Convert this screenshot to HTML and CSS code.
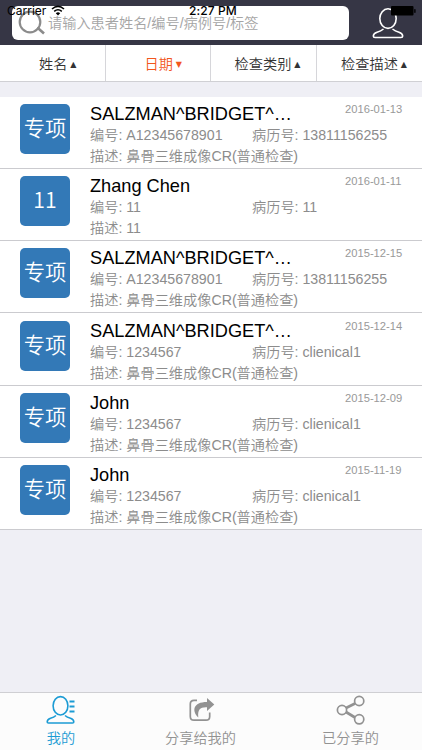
FILE: index.html
```
<!DOCTYPE html>
<html lang="zh-CN">
<head>
<meta charset="utf-8">
<title>我的</title>
<link rel="stylesheet" href="styles.css">
</head>
<body>
<div class="app">
  <div class="status">
    <span class="carrier">Carrier</span>
    <svg class="wifi" width="14" height="11" viewBox="0 0 14 11" fill="none" stroke="#000" stroke-width="1.6"><path d="M1 4Q7-1.2 13 4M3.2 6.3Q7 3.2 10.8 6.3"/><path d="M4.8 8.2Q7 6.5 9.2 8.2L7 10.6Z" fill="#000" stroke="none"/></svg>
    <span class="clock">2:27 PM</span>
    <svg class="battery" width="25" height="10" viewBox="0 0 25 10"><rect width="22.5" height="9.5" rx="1"/><rect x="23.2" y="3" width="1.4" height="4" rx=".7"/></svg>
  </div>
  <header class="header">
    <div class="search">
      <svg width="27" height="26" viewBox="0 0 27 26" fill="none" stroke="#8b8b8b" stroke-width="2.2"><circle cx="12" cy="12" r="10.3"/><path d="M19.3 17.5L26 23.5" stroke-width="2.6"/></svg>
      <span>请输入患者姓名/编号/病例号/标签</span>
    </div>
    <svg class="user" width="32" height="32" viewBox="0 0 32 32" fill="none" stroke="#fff" stroke-width="1.6" stroke-linejoin="round"><ellipse cx="16" cy="11.6" rx="8.2" ry="9.8"/><path d="M11.500 22Q9 24 5 25.200Q1.500 26.500 1.300 29Q1.300 30.500 3 30.500H29Q30.700 30.500 30.700 29Q30.500 26.500 27 25.200Q23 24 20.500 22"/></svg>
  </header>
  <nav class="sort">
    <div>姓名<i>▲</i></div>
    <div class="active">日期<i>▼</i></div>
    <div>检查类别<i>▲</i></div>
    <div>检查描述<i>▲</i></div>
  </nav>
  <main class="list">
    <article class="row"><div class="tag">专项</div><div class="info"><div class="top"><h2>SALZMAN^BRIDGET^…</h2><time>2016-01-13</time></div><div class="ids"><span>编号: A12345678901</span><span>病历号: 13811156255</span></div><p>描述: 鼻骨三维成像CR(普通检查)</p></div></article>
    <article class="row"><div class="tag">11</div><div class="info"><div class="top"><h2>Zhang Chen</h2><time>2016-01-11</time></div><div class="ids"><span>编号: 11</span><span>病历号: 11</span></div><p>描述: 11</p></div></article>
    <article class="row"><div class="tag">专项</div><div class="info"><div class="top"><h2>SALZMAN^BRIDGET^…</h2><time>2015-12-15</time></div><div class="ids"><span>编号: A12345678901</span><span>病历号: 13811156255</span></div><p>描述: 鼻骨三维成像CR(普通检查)</p></div></article>
    <article class="row"><div class="tag">专项</div><div class="info"><div class="top"><h2>SALZMAN^BRIDGET^…</h2><time>2015-12-14</time></div><div class="ids"><span>编号: 1234567</span><span>病历号: clienical1</span></div><p>描述: 鼻骨三维成像CR(普通检查)</p></div></article>
    <article class="row"><div class="tag">专项</div><div class="info"><div class="top"><h2>John</h2><time>2015-12-09</time></div><div class="ids"><span>编号: 1234567</span><span>病历号: clienical1</span></div><p>描述: 鼻骨三维成像CR(普通检查)</p></div></article>
    <article class="row"><div class="tag">专项</div><div class="info"><div class="top"><h2>John</h2><time>2015-11-19</time></div><div class="ids"><span>编号: 1234567</span><span>病历号: clienical1</span></div><p>描述: 鼻骨三维成像CR(普通检查)</p></div></article>
  </main>
  <footer class="tabs">
    <div class="active"><svg width="30" height="30" viewBox="0 0 30 30" fill="none" stroke="currentColor" stroke-width="1.6"><ellipse cx="14.5" cy="10.8" rx="7.4" ry="9.2"/><path d="M10 20.5Q8 22.3 4.5 23.3Q1.2 24.5 1.2 27Q1.2 28 2.5 28H26.5Q27.8 28 27.8 27Q27.8 24.5 24.5 23.3Q21 22.3 19 20.5"/><path d="M23.5 6.5H28.5M23.5 11.5H28.5M23.5 16.5H28.5" stroke-width="2"/></svg><span>我的</span></div>
    <div><svg width="30" height="30" viewBox="0 0 30 30" fill="none" stroke="currentColor" stroke-width="1.7"><path d="M11 5.300H8Q4.300 5.300 4.300 9V21.500Q4.300 25.200 8 25.200H20Q23.700 25.200 23.700 21.500V17.500"/><path d="M21 3L28.300 9.500L21 16V12.300C14 12 11.500 14.500 12.300 22.500C5.500 16 7 7 21 7Z" fill="currentColor" stroke="none"/></svg><span>分享给我的</span></div>
    <div><svg width="30" height="30" viewBox="0 0 30 30" fill="none" stroke="currentColor" stroke-width="1.7"><path d="M10 13L19 8.5M10 17L19 22.5" stroke-width="2.7"/><circle cx="6" cy="15" r="4.6"/><circle cx="23.2" cy="6" r="4.6"/><circle cx="23.2" cy="24.3" r="4.6"/></svg><span>已分享的</span></div>
  </footer>
</div>
</body>
</html>
```
FILE: styles.css
```
* { box-sizing: border-box; }
body { margin: 0; font-family: "Liberation Sans", "Noto Sans CJK SC", sans-serif; font-weight: 350; }
h2, p { margin: 0; font-weight: 400; }
p { font-weight: 350; }
svg { display: block; flex: none; }
.app { position: relative; display: flex; flex-direction: column; width: 422px; height: 750px; background: #efeff5; overflow: hidden; }

.status { position: absolute; inset: 0 0 auto; height: 22px; z-index: 2; color: #000; font: 500 12px/22px Inter, sans-serif; }
.carrier { position: absolute; left: 7px; font-weight: 400; }
.wifi { position: absolute; left: 51px; top: 5px; }
.clock { position: absolute; left: 189px; letter-spacing: .1px; }
.battery { position: absolute; right: 6px; top: 6px; }

.header { display: flex; align-items: flex-start; height: 45px; padding: 6px 0 0 12px; background: #363645; }
.search { display: flex; align-items: center; width: 337px; height: 34px; padding-left: 6px; border-radius: 6px; background: #fff; color: #a5a5a5; font-size: 14.2px; }
.search span { padding: 0 0 2px 3px; white-space: nowrap; }
.user { margin: 1px 0 0 23px; }

.sort { display: grid; grid-template-columns: repeat(4, 1fr); height: 37px; background: #fff; border-bottom: 1px solid #d0d0d4; color: #333; font-size: 14.2px; }
.sort div { display: flex; align-items: center; justify-content: flex-end; padding: 0 15px 1px 0; border-right: 1px solid #d6d6da; white-space: nowrap; }
.sort div:nth-child(-n+2) { padding-right: 28px; }
.sort div:last-child { border: 0; }
.sort i { margin-left: 3px; font: normal 8px/12px "DejaVu Sans", sans-serif; padding-top: 5px; }
.sort .active { color: #f2561d; }

.list { margin-top: 14.6px; }
.row { display: flex; height: 72.25px; padding: 7.4px 0 0 20px; background: #fff; border-bottom: 1px solid #cbcbcf; }
.tag { width: 50px; height: 50px; border-radius: 5px; background: #3379b7; color: #fff; font-family: "Noto Sans CJK SC", sans-serif; font-size: 21.3px; line-height: 46px; text-align: center; }
.info { flex: 1; margin-left: 20px; color: #8c8c8c; font-size: 14.2px; }
.top { display: flex; justify-content: space-between; height: 21px; padding-right: 19px; }
.top h2 { color: #000; font-size: 18.2px; line-height: 20px; }
.top time { width: 58px; color: #999; font-size: 11.2px; line-height: 11px; white-space: nowrap; }
.ids { display: grid; grid-template-columns: 162px 1fr; height: 21px; line-height: 21px; }
.info p { line-height: 21px; height: 21px; }

.tabs { display: grid; grid-template-columns: 122px 157px 143px; height: 58px; margin-top: auto; padding-top: 2px; background: #fcfcfc; border-top: 1px solid #cfcfd3; color: #929292; font-size: 14.2px; }
.tabs div { display: flex; flex-direction: column; align-items: center; }
.tabs span { margin-top: 2px; line-height: 22px; }
.tabs .active { color: #1b9bd4; }
```
